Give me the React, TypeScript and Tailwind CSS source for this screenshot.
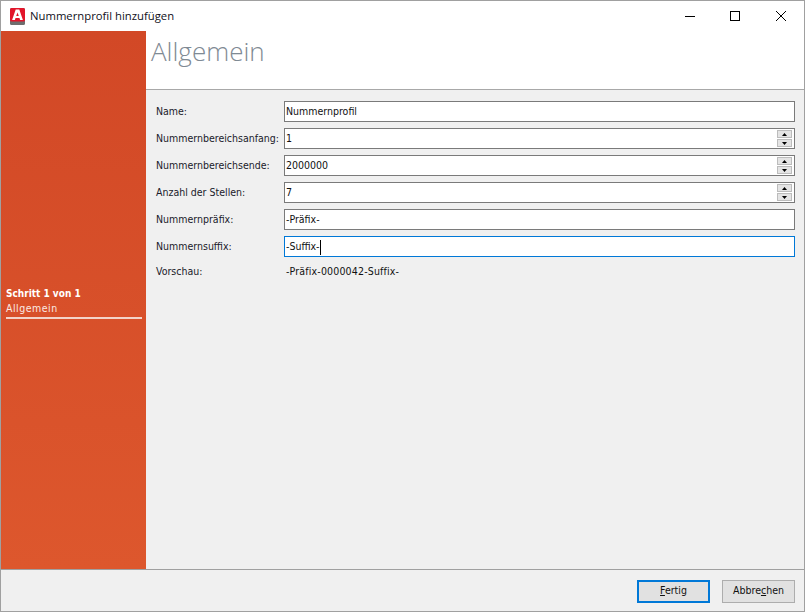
const fields = [
  { label: 'Name:', value: 'Nummernprofil' },
  { label: 'Nummernbereichsanfang:', value: '1', spin: true },
  { label: 'Nummernbereichsende:', value: '2000000', spin: true },
  { label: 'Anzahl der Stellen:', value: '7', spin: true },
  { label: 'Nummernpräfix:', value: '-Präfix-' },
  { label: 'Nummernsuffix:', value: '-Suffix-', focused: true },
];

function Spinner() {
  return (
    <div className="flex flex-col gap-[1px] mr-[2px]">
      <div className="w-[15px] h-[8px] bg-[#e4e4e4] border border-[#bcbcbc] flex items-center justify-center">
        <svg width="5" height="3" viewBox="0 0 5 3"><path d="M2.5 0L5 3H0z" fill="#000" /></svg>
      </div>
      <div className="w-[15px] h-[8px] bg-[#e4e4e4] border border-[#bcbcbc] flex items-center justify-center">
        <svg width="5" height="3" viewBox="0 0 5 3"><path d="M0 0h5L2.5 3z" fill="#000" /></svg>
      </div>
    </div>
  );
}

function Field({ label, value, spin, focused }: { label: string; value: string; spin?: boolean; focused?: boolean }) {
  return (
    <div className="flex items-center h-[21px]">
      <div className="w-[128px] shrink-0 text-[#1a1a2a] pt-[1px]">{label}</div>
      <div className={`flex-1 h-[21px] flex items-center justify-between bg-white pl-[1px] border ${focused ? 'border-[#0078d7]' : 'border-[#7a7a7a]'}`}>
        <span className="text-[#111] flex items-center pt-[1px]">
          {value}
          {focused && <span className="inline-block w-[1px] h-[15px] bg-black" />}
        </span>
        {spin && <Spinner />}
      </div>
    </div>
  );
}

export default function App() {
  return (
    <div className="w-[805px] h-[612px] flex flex-col bg-[#f0f0f0] border border-[#a0a0a0] text-[10.5px] overflow-hidden font-['DejaVu_Sans_Condensed','Roboto',sans-serif]">
      {/* title bar */}
      <div className="h-[30px] shrink-0 bg-white flex items-center pl-[9px]">
        <svg width="15" height="17" viewBox="0 0 15 17" className="shrink-0">
          <rect width="15" height="17" rx="1.5" fill="#6e6e6e" />
          <rect width="15" height="13.5" rx="1.5" fill="#e2162b" />
          <path d="M5.7 1.5h3.6l3.6 10.5h-2.8l-.6-2H5.5l-.6 2H2.1zM7.5 4.4l-1.3 3.6h2.6z" fill="#fff" fillRule="evenodd" />
        </svg>
        <span className="ml-[5px] text-[11.3px] text-[#101020] font-['Open_Sans',sans-serif]">Nummernprofil hinzufügen</span>
        <div className="ml-auto flex items-center">
          <svg width="10" height="10" viewBox="0 0 10 10" className="mr-[35px]"><path d="M0 5.5h10" stroke="#000" strokeWidth="1" /></svg>
          <svg width="10" height="10" viewBox="0 0 10 10" className="mr-[36px]"><rect x="0.5" y="0.5" width="9" height="9" fill="none" stroke="#000" strokeWidth="1" /></svg>
          <svg width="10" height="10" viewBox="0 0 10 10" className="mr-[18px]"><path d="M0 0l10 10M10 0L0 10" stroke="#000" strokeWidth="1" /></svg>
        </div>
      </div>

      <div className="flex-1 flex min-h-0">
        {/* step sidebar */}
        <div className="w-[145px] shrink-0 bg-gradient-to-b from-[#d24826] to-[#dd572d] flex flex-col pl-[5px] pr-[4px] pt-[256px] text-white">
          <div className="font-bold text-[10px] leading-[14px]">Schritt 1 von 1</div>
          <div className="tracking-[0.5px] leading-[14px] text-[#fbe9e3]">Allgemein</div>
          <div className="h-[2px] mt-[2px] bg-[#f3d3c8]" />
        </div>

        <div className="flex-1 flex flex-col min-w-0">
          <div className="h-[59px] shrink-0 bg-white border-b border-[#a8a8a8] pl-[5px] pt-[2px]">
            <div className="text-[26px] leading-[36px] font-light text-[#7f8a94] font-['Open_Sans',sans-serif]">Allgemein</div>
          </div>
          <div className="flex-1 flex flex-col gap-[6px] pl-[10px] pr-[9px] pt-[11px]">
            {fields.map((f) => (
              <Field key={f.label} {...f} />
            ))}
            <div className="flex items-center h-[16px] mt-[1px]">
              <div className="w-[128px] shrink-0 text-[#1a1a2a]">Vorschau:</div>
              <div className="pl-[2px] tracking-[0.17px] text-[#111]">-Präfix-0000042-Suffix-</div>
            </div>
          </div>
        </div>
      </div>

      {/* footer */}
      <div className="h-[42px] shrink-0 border-t border-[#a0a0a0] flex items-center justify-end gap-[12px] pr-[9px] pt-[1px]">
        <button className="w-[73px] h-[23px] bg-[#e1e1e1] border-2 border-[#0078d7] text-[#111]">
          <span className="underline">F</span>ertig
        </button>
        <button className="w-[73px] h-[23px] bg-[#e1e1e1] border border-[#adadad] text-[#111]">
          Abbre<span className="underline">c</span>hen
        </button>
      </div>
    </div>
  );
}
